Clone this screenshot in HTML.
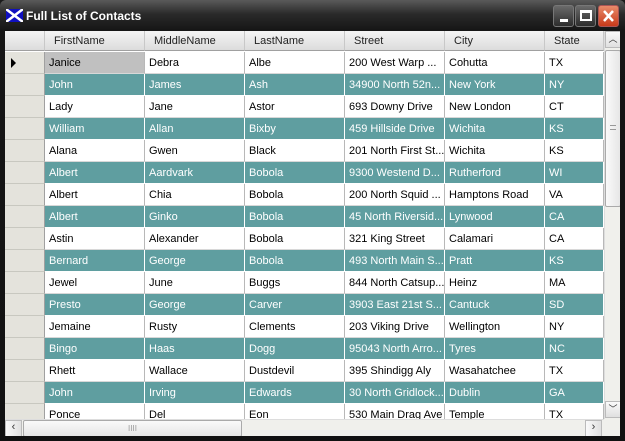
<!DOCTYPE html><html><head><style>
*{margin:0;padding:0;box-sizing:border-box}
body{width:625px;height:441px;overflow:hidden;background:#1a1a1a;font-family:"Liberation Sans",sans-serif;font-size:11px;position:relative}
.win{position:absolute;left:0;top:0;width:625px;height:441px;border-radius:6px 6px 0 0;background:linear-gradient(#5a5a5a,#2a2a2a 14px,#161616 30px,#111);}
.title{position:absolute;left:26px;top:9px;color:#fff;font-weight:bold;font-size:12px}
.btn{position:absolute;top:5px;width:21px;height:22px;border:1px solid #777;border-radius:3px;background:linear-gradient(#6a6a6a,#2c2c2c)}
.grid{position:absolute;left:5px;top:31px;width:615px;height:405px;background:#fff;overflow:hidden}
.hdr{position:absolute;top:0;height:20px;background:linear-gradient(#f4f4f4,#dcdcdc);border-bottom:1px solid #a0a0a0;border-right:1px solid #c8c8c8;color:#222;padding:4px 0 0 9px;font-size:11px}
.rh{position:absolute;left:0;width:40px;height:22px;background:#e4e3dc;border-bottom:1px solid #c8c8c0;border-right:1px solid #a0a0a0}
.c{position:absolute;height:22px;border-right:1px solid #b8b8b8;border-bottom:1px solid #d8d8d8;padding:5px 0 0 4px;white-space:nowrap;overflow:hidden;color:#000}
.t .c{background:#5f9ea0;color:#fff;border-bottom-color:#fff;border-right-color:#fff}
</style></head><body>
<div class="win">
<svg style="position:absolute;left:6px;top:9px" width="17" height="13"><rect width="17" height="13" fill="#1010c0"/><path d="M0 0L17 13M17 0L0 13" stroke="#fff" stroke-width="2.5"/></svg>
<div class="title">Full List of Contacts</div>
<div class="btn" style="left:553px"><div style="position:absolute;left:6px;top:13px;width:8px;height:3px;background:#fff"></div></div>
<div class="btn" style="left:575px"><div style="position:absolute;left:4px;top:4px;width:12px;height:11px;border:2px solid #fff;border-top-width:3px"></div></div>
<div class="btn" style="left:598px;background:linear-gradient(#e88a6a,#c83a1a);border-color:#a55"><svg width="19" height="20" style="position:absolute;left:0;top:0"><path d="M5 5L14 15M14 5L5 15" stroke="#fff" stroke-width="2.5"/></svg></div>
<div class="grid" id="g">
<div class="hdr" style="left:0;width:40px"></div>
<div class="hdr" style="left:40px;width:100px">FirstName</div>
<div class="hdr" style="left:140px;width:100px">MiddleName</div>
<div class="hdr" style="left:240px;width:100px">LastName</div>
<div class="hdr" style="left:340px;width:100px">Street</div>
<div class="hdr" style="left:440px;width:100px">City</div>
<div class="hdr" style="left:540px;width:59px">State</div>
<script>
var d=[["Janice","Debra","Albe","200 West Warp ...","Cohutta","TX"],["John","James","Ash","34900 North 52n...","New York","NY"],["Lady","Jane","Astor","693 Downy Drive","New London","CT"],["William","Allan","Bixby","459 Hillside Drive","Wichita","KS"],["Alana","Gwen","Black","201 North First St...","Wichita","KS"],["Albert","Aardvark","Bobola","9300 Westend D...","Rutherford","WI"],["Albert","Chia","Bobola","200 North Squid ...","Hamptons Road","VA"],["Albert","Ginko","Bobola","45 North Riversid...","Lynwood","CA"],["Astin","Alexander","Bobola","321 King Street","Calamari","CA"],["Bernard","George","Bobola","493 North Main S...","Pratt","KS"],["Jewel","June","Buggs","844 North Catsup...","Heinz","MA"],["Presto","George","Carver","3903 East 21st S...","Cantuck","SD"],["Jemaine","Rusty","Clements","203 Viking Drive","Wellington","NY"],["Bingo","Haas","Dogg","95043 North Arro...","Tyres","NC"],["Rhett","Wallace","Dustdevil","395 Shindigg Aly","Wasahatchee","TX"],["John","Irving","Edwards","30 North Gridlock...","Dublin","GA"],["Ponce","Del","Eon","530 Main Drag Ave","Temple","TX"]];
var x=[40,140,240,340,440,540],w=[100,100,100,100,100,59],h="";
d.forEach(function(r,i){var y=21+i*22;h+='<div class="rh" style="top:'+y+'px">'+(i==0?'<svg width="10" height="22" style="position:absolute;left:6px"><path d="M0 6L5 11L0 16Z" fill="#000"/></svg>':'')+'</div><div class="'+(i%2?'t':'')+'">';r.forEach(function(v,j){h+='<div class="c" style="left:'+x[j]+'px;top:'+y+'px;width:'+w[j]+'px'+(i==0&&j==0?';background:#c0c0c0':'')+'">'+v+'</div>'});h+='</div>'});
document.write(h);
</script>
<div style="position:absolute;left:599px;top:0;width:16px;height:388px;background:#f0f0ec;border-left:1px solid #ddd">
<div style="position:absolute;left:0;top:0;width:16px;height:17px;background:linear-gradient(#fafafa,#e0e0e0);border:1px solid #bbb;font-size:9px;text-align:center;color:#333">︿</div>
<div style="position:absolute;left:0;top:19px;width:16px;height:157px;background:linear-gradient(90deg,#fafafa,#e6e6e6);border:1px solid #aaa;border-radius:2px"><div style="position:absolute;left:4px;top:74px;width:6px;height:5px;border-top:1px solid #999;border-bottom:1px solid #999"></div></div>
<div style="position:absolute;left:0;top:370px;width:16px;height:17px;background:linear-gradient(#fafafa,#e0e0e0);border:1px solid #bbb;font-size:9px;text-align:center;color:#333">﹀</div>
</div>
<div style="position:absolute;left:0;top:388px;width:599px;height:17px;background:#f0f0ec;border-top:1px solid #ddd">
<div style="position:absolute;left:0;top:0;width:17px;height:17px;background:linear-gradient(90deg,#fafafa,#e0e0e0);border:1px solid #bbb;text-align:center;color:#333">‹</div>
<div style="position:absolute;left:18px;top:0;width:219px;height:17px;background:linear-gradient(#fafafa,#e6e6e6);border:1px solid #aaa;border-radius:2px;font-size:8px;text-align:center;color:#999;line-height:15px">IIII</div>
<div style="position:absolute;left:580px;top:0;width:17px;height:17px;background:linear-gradient(90deg,#fafafa,#e0e0e0);border:1px solid #bbb;text-align:center;color:#333">›</div>
</div>
<div style="position:absolute;left:599px;top:388px;width:16px;height:17px;background:#f0f0ec"></div>
</div>
</div>
</body></html>
